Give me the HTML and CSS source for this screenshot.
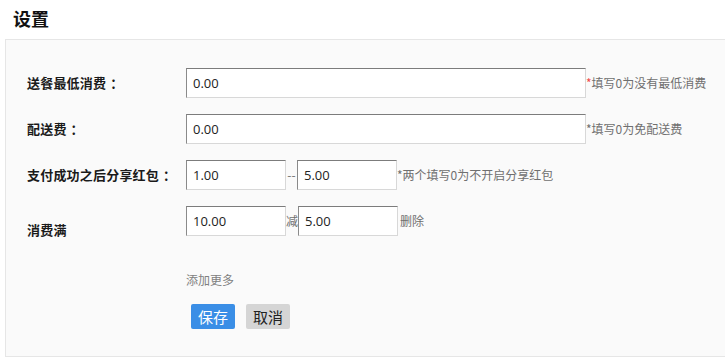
FILE: index.html
```html
<!DOCTYPE html>
<html lang="zh-CN">
<head>
<meta charset="utf-8">
<title>设置</title>
<link rel="stylesheet" href="styles.css">
</head>
<body>
<div class="page">
  <h1 class="title">设置</h1>
  <div class="panel">
    <div class="row">
      <div class="label">送餐最低消费<span class="colon">：</span></div>
      <input class="inp inp-wide" type="text" value="0.00">
      <span class="hint"><span class="star-red">*</span>填写0为没有最低消费</span>
    </div>
    <div class="row">
      <div class="label">配送费<span class="colon">：</span></div>
      <input class="inp inp-wide" type="text" value="0.00">
      <span class="hint">*填写0为免配送费</span>
    </div>
    <div class="row">
      <div class="label">支付成功之后分享红包<span class="colon">：</span></div>
      <input class="inp inp-narrow" type="text" value="1.00">
      <span class="sep">--</span>
      <input class="inp inp-narrow" type="text" value="5.00">
      <span class="hint">*两个填写0为不开启分享红包</span>
    </div>
    <div class="row row-discount">
      <div class="label label-low">消费满</div>
      <input class="inp inp-narrow" type="text" value="10.00">
      <span class="sep sep-cn">减</span>
      <input class="inp inp-narrow" type="text" value="5.00">
      <span class="hint hint-del">删除</span>
    </div>
    <div class="more-row">
      <span class="more">添加更多</span>
    </div>
    <div class="actions">
      <button class="btn btn-save" type="button">保存</button>
      <button class="btn btn-cancel" type="button">取消</button>
    </div>
  </div>
</div>
</body>
</html>
```
FILE: styles.css
```css
html, body {
  margin: 0;
  padding: 0;
  background: #ffffff;
  overflow: hidden;
}
body {
  font-family: "Noto Sans CJK SC", "Noto Sans", sans-serif;
  color: #222;
}
.page {
  width: 725px;
  height: 358px;
}
.title {
  margin: 0;
  height: 39px;
  padding-left: 13px;
  font-size: 18px;
  font-weight: bold;
  line-height: 36px;
  color: #111;
}
.panel {
  margin-left: 5px;
  margin-right: -20px;
  border: 1px solid #e6e6e6;
  background: #fafafa;
  padding: 28px 0 27px 21px;
}
.row {
  display: flex;
  align-items: center;
  height: 30px;
  margin-bottom: 16px;
}
.label {
  width: 159px;
  flex: none;
  font-size: 13px;
  font-weight: bold;
  line-height: 18px;
  color: #1a1a1a;
  letter-spacing: 0.2px;
}
.colon {
  display: inline-block;
  width: 13px;
  text-align: center;
  margin-left: 4px;
}
.label-low {
  position: relative;
  top: 9px;
}
.inp {
  box-sizing: border-box;
  height: 30px;
  margin: 0;
  padding: 0 6px;
  border-style: solid;
  border-width: 1px;
  border-color: #7c7c7c #d8d8d8 #d8d8d8 #8a8a8a;
  background: #fff;
  font-family: "Open Sans", "Noto Sans CJK SC", sans-serif;
  font-size: 13px;
  color: #222;
  outline: none;
  flex: none;
}
.inp-wide {
  width: 400px;
}
.inp-narrow {
  width: 100px;
}
.sep {
  width: 11px;
  font-size: 12px;
  color: #6f6f6f;
  line-height: 16px;
  text-align: center;
  flex: none;
}
.sep-cn {
  width: 12px;
}
.hint {
  font-size: 12px;
  color: #6f6f6f;
  line-height: 16px;
}
.hint-del {
  padding-left: 2px;
}
.star-red {
  color: #f04848;
}
.more-row {
  padding-left: 159px;
  margin-top: 30px;
  height: 16px;
}
.more {
  font-size: 12px;
  line-height: 16px;
  color: #808080;
}
.actions {
  display: flex;
  padding-left: 164px;
  margin-top: 22px;
  gap: 11px;
}
.btn {
  box-sizing: border-box;
  width: 44px;
  height: 25px;
  border: none;
  border-radius: 2px;
  padding: 0;
  font-family: "Noto Sans CJK SC", sans-serif;
  font-size: 15px;
  line-height: 25px;
  cursor: pointer;
}
.btn-save {
  background: #3a8ee6;
  color: #fff;
}
.btn-cancel {
  background: #d5d5d5;
  color: #222;
}
```
